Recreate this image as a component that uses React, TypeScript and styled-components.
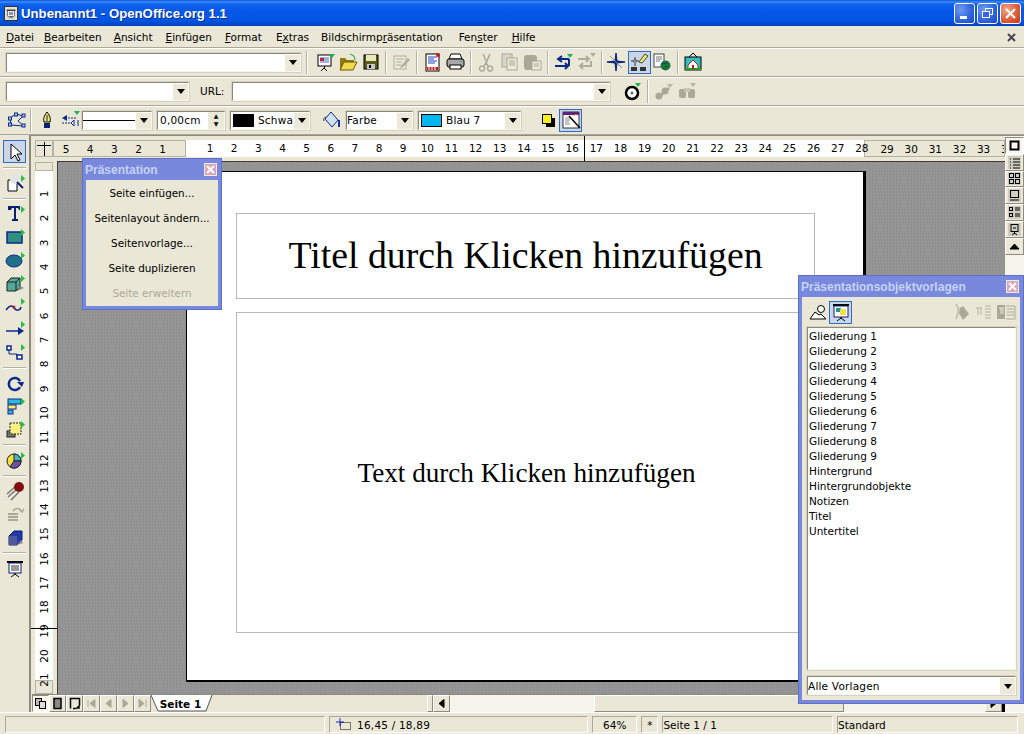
import React from 'react';
import styled, { createGlobalStyle, css } from 'styled-components';

const GlobalStyle = createGlobalStyle`
  html, body { margin: 0; padding: 0; background: #ece9d8; }
  body { font-family: "DejaVu Sans", "Liberation Sans", sans-serif; font-size: 11px; color: #000; }
  * { box-sizing: border-box; }
`;

const hatch = css`
  background-color: #ece9d8;
  background-image: conic-gradient(#e8e5d4 25%, transparent 0 50%, #e8e5d4 0 75%, transparent 0);
  background-size: 2px 2px;
`;

const sunken = css`
  border: 2px solid;
  border-color: #8b887a #f7f6ef #f7f6ef #8b887a;
  outline: 1px solid #d5d2c2;
  outline-offset: -1px;
`;

const Desktop = styled.div`
  position: relative;
  width: 1024px;
  height: 734px;
  overflow: hidden;
  display: flex;
  flex-direction: column;
  ${hatch}
`;

const TitleBar = styled.div`
  height: 26px;
  flex: none;
  display: flex;
  align-items: center;
  padding: 0 3px 0 4px;
  background: linear-gradient(180deg, #0a55d8 0, #3a8cf8 2px, #0f62ec 4px, #0558e6 12px, #0456e4 20px, #0348cf 24px, #0240b8 26px);
`;

const TitleLogo = styled.div`
  width: 14px;
  height: 15px;
  flex: none;
  display: flex;
  align-items: center;
  justify-content: center;
  background: #e4e1d0;
  border: 1px solid #333;
`;

const TitleText = styled.span`
  margin-left: 3px;
  flex: 1;
  color: #fff;
  font-family: "Liberation Sans", sans-serif;
  font-size: 13.2px;
  font-weight: bold;
  text-shadow: 1px 1px 0 #0a2f90;
`;

const WinButton = styled.div<{ $close?: boolean }>`
  width: 21px;
  height: 21px;
  margin-left: 2px;
  display: flex;
  align-items: center;
  justify-content: center;
  border: 1px solid #fff;
  border-radius: 3px;
  background: ${(p) =>
    p.$close
      ? 'radial-gradient(circle at 30% 30%, #f0a58c, #dc5a36 60%, #c03a18)'
      : 'radial-gradient(circle at 30% 30%, #6f9af0, #2f62dc 60%, #1c48c4)'};
`;

const MenuBar = styled.div`
  height: 22px;
  flex: none;
  display: flex;
  align-items: center;
  padding: 1px 8px 0 6px;
  border-bottom: 1px solid #aca899;
  box-shadow: 0 1px 0 #fff;
`;

const MenuItem = styled.span<{ $left: number }>`
  margin-left: ${(p) => p.$left}px;
  white-space: nowrap;
  font-size: 10.5px;
`;

const MenuClose = styled.span`
  margin-left: auto;
  color: #4a4458;
  display: flex;
`;

const Toolbar = styled.div`
  height: 29px;
  flex: none;
  display: flex;
  align-items: center;
  padding-left: 5px;
  border-bottom: 1px solid #aca899;
  box-shadow: inset 0 1px 0 #fff;
`;

const Separator = styled.div<{ $l?: number; $r?: number }>`
  width: 1px;
  height: 23px;
  flex: none;
  margin: 0 ${(p) => p.$r ?? 3.4}px 0 ${(p) => p.$l ?? 3.4}px;
  background: #b5b2a3;
  box-shadow: 1px 0 0 #fff;
`;

const ToolButton = styled.div<{ $active?: boolean; $left?: number }>`
  width: 23px;
  height: 23px;
  flex: none;
  margin-left: ${(p) => p.$left ?? 0}px;
  display: flex;
  align-items: center;
  justify-content: center;
  ${(p) => p.$active && 'background: #cbd5e8; outline: 1px solid #316ac5; outline-offset: -1px;'}
`;

const Combo = styled.div<{ $width: number; $left?: number }>`
  width: ${(p) => p.$width}px;
  height: 21px;
  flex: none;
  margin-left: ${(p) => p.$left ?? 0}px;
  display: flex;
  align-items: center;
  background: #fff;
  overflow: hidden;
  font-size: 10.5px;
  ${sunken}
`;

const ComboArrow = styled.div`
  width: 16px;
  height: 17px;
  margin-left: auto;
  flex: none;
  display: flex;
  align-items: center;
  justify-content: center;
  background: #ece9d8;
  border-left: 1px solid #fff;
  border-top: 1px solid #fff;
  &::after {
    content: '';
    border: 4px solid transparent;
    border-top: 5px solid #000;
    border-bottom: 0;
  }
`;

const ComboText = styled.span<{ $pad?: number }>`
  flex: 0 1 auto;
  min-width: 0;
  overflow: hidden;
  padding-left: ${(p) => p.$pad ?? 0}px;
  white-space: nowrap;
  letter-spacing: 0.2px;
`;

const UrlLabel = styled.span`
  margin: 0 7px 0 10px;
  font-size: 10.5px;
`;

const LineSample = styled.div`
  flex: 1;
  height: 1px;
  background: #000;
`;

const Spinner = styled.div`
  width: 16px;
  height: 17px;
  margin-left: auto;
  flex: none;
  display: flex;
  flex-direction: column;
  background: #ece9d8;
  font-size: 6px;
  line-height: 8px;
  text-align: center;
  color: #000;
`;

const ColorSwatch = styled.div<{ $color: string }>`
  width: 21px;
  height: 13px;
  flex: none;
  margin: 0 4px 0 2px;
  background: ${(p) => p.$color};
  border: 1px solid #000;
`;

const Main = styled.div`
  flex: 1;
  min-height: 0;
  display: flex;
`;

const LeftBar = styled.div`
  width: 31px;
  flex: none;
  display: flex;
  flex-direction: column;
  align-items: center;
  padding-top: 5px;
  border-right: 2px solid #8d8b7f;
`;

const LeftSep = styled.div`
  width: 23px;
  height: 1px;
  flex: none;
  margin: 4px 0 3px;
  background: #b5b2a3;
  box-shadow: 0 1px 0 #fff;
`;

const Center = styled.div`
  position: relative;
  flex: 1;
  min-width: 0;
  display: flex;
  flex-direction: column;
`;

const HRuler = styled.div`
  height: 26px;
  flex: none;
  display: flex;
  padding: 4px 0 4px 4px;
  border-top: 1px solid #8d8b7f;
`;

const RulerCorner = styled.div`
  width: 18px;
  flex: none;
  display: flex;
  align-items: center;
  justify-content: center;
  border: 1px solid #b5b2a3;
`;

const RulerGrey = styled.div<{ $width: number; $pad?: number }>`
  width: ${(p) => p.$width}px;
  flex: none;
  display: flex;
  padding-left: ${(p) => p.$pad ?? 0}px;
  border: 1px solid #b5b2a3;
  overflow: hidden;
`;

const RulerWhite = styled.div`
  position: relative;
  z-index: 1;
  width: 678px;
  flex: none;
  display: flex;
  padding-left: 12px;
  background: #fff;
`;

const RulerCell = styled.span`
  width: 24.15px;
  flex: none;
  text-align: center;
  line-height: 17px;
  font-size: 10.5px;
`;

const RulerMarkX = styled.div`
  position: absolute;
  left: 553px;
  top: 1px;
  width: 1px;
  height: 25px;
  background: #000;
  z-index: 2;
`;

const WorkRow = styled.div`
  flex: 1;
  min-height: 0;
  display: flex;
`;

const VRuler = styled.div`
  width: 26px;
  flex: none;
  position: relative;
  display: flex;
  flex-direction: column;
  padding: 1px 4px 0;
`;

const VGrey = styled.div<{ $height: number }>`
  height: ${(p) => p.$height}px;
  flex: none;
  border: 1px solid #b5b2a3;
`;

const VWhite = styled.div`
  height: 509px;
  flex: none;
  padding-top: 11px;
  background: #fff;
`;

const VCell = styled.span`
  height: 24.3px;
  display: flex;
  align-items: center;
  justify-content: center;
  font-size: 10.5px;
  span {
    transform: rotate(-90deg);
    white-space: nowrap;
  }
`;

const RulerMarkY = styled.div`
  position: absolute;
  left: 0;
  right: 0;
  top: 467px;
  height: 1px;
  background: #000;
`;

const Workspace = styled.div`
  flex: 1;
  min-width: 0;
  padding: 9px 0 0 128px;
  border-top: 1px solid #3c3c3c;
  border-left: 1px solid #3c3c3c;
  background-color: #989898;
  background-image: conic-gradient(#909090 25%, transparent 0 50%, #909090 0 75%, transparent 0);
  background-size: 3px 3px;
`;

const Slide = styled.div`
  width: 680px;
  height: 511px;
  display: flex;
  flex-direction: column;
  gap: 13px;
  padding: 41px 0 0 49px;
  background: #fff;
  border: solid #000;
  border-width: 1px 3px 2px 1px;
`;

const Placeholder = styled.div<{ $height: number; $size: number; $above?: number; $below?: number; $before?: number }>`
  width: 579px;
  height: ${(p) => p.$height}px;
  flex: none;
  display: flex;
  align-items: center;
  justify-content: center;
  padding: ${(p) => p.$above ?? 0}px 0 ${(p) => p.$below ?? 0}px ${(p) => p.$before ?? 0}px;
  border: 1px solid #b8b8b8;
  font-family: "Liberation Serif", serif;
  font-size: ${(p) => p.$size}px;
  white-space: nowrap;
`;

const TabBar = styled.div`
  height: 18px;
  flex: none;
  display: flex;
  align-items: stretch;
  margin-left: 1px;
  border-top: 1px solid #8d8b7f;
`;

const NavButton = styled.div<{ $pressed?: boolean }>`
  width: 17px;
  flex: none;
  display: flex;
  align-items: center;
  justify-content: center;
  border: 1px solid;
  border-color: #fff #8d8b7f #8d8b7f #fff;
  ${(p) => p.$pressed && 'background: #f7f6ef; border-color: #8d8b7f #fff #fff #8d8b7f;'}
`;

const SheetTab = styled.div`
  position: relative;
  width: 62px;
  flex: none;
  display: flex;
  align-items: center;
  justify-content: center;
  padding-right: 3px;
  font-size: 10.5px;
  font-weight: bold;
  span {
    position: relative;
  }
  svg {
    position: absolute;
    inset: 0;
  }
`;

const TabFill = styled.div`
  width: 214px;
  flex: none;
`;

const ScrollSplit = styled.div`
  width: 6px;
  flex: none;
  border: 1px solid;
  border-color: #fff #8d8b7f #8d8b7f #fff;
`;

const ScrollTrack = styled.div<{ $grow?: boolean }>`
  ${(p) => (p.$grow ? 'flex: 1;' : 'width: 144px; flex: none;')}
  background: #f5f3ea;
`;

const ScrollThumb = styled.div`
  width: 250px;
  flex: none;
  border: 1px solid;
  border-color: #fff #8d8b7f #8d8b7f #fff;
`;

const ScrollEnd = styled.div`
  width: 3px;
  flex: none;
  background: #000;
`;

const SideStrip = styled.div`
  width: 19px;
  flex: none;
  padding-top: 1px;
  display: flex;
  flex-direction: column;
  background: #f5f3ea;
  border-top: 1px solid #8d8b7f;
`;

const SideButton = styled.div<{ $pressed?: boolean }>`
  height: 16.8px;
  flex: none;
  display: flex;
  align-items: center;
  justify-content: center;
  background: #ece9d8;
  border: 1px solid;
  border-color: #fff #8d8b7f #8d8b7f #fff;
  ${(p) => p.$pressed && 'background: #f7f6ef; border-color: #8d8b7f #fff #fff #8d8b7f;'}
`;

const GlyphWell = styled.span`
  display: flex;
  background: #cfcdbf;
`;

const StatusBar = styled.div`
  height: 22px;
  flex: none;
  display: flex;
  padding: 3px 5px 1px;
  gap: 4.1px;
  border-top: 1px solid #fff;
`;

const StatusCell = styled.div<{ $width: number; $center?: boolean; $indent?: number }>`
  width: ${(p) => p.$width}px;
  flex: none;
  display: flex;
  align-items: center;
  justify-content: ${(p) => (p.$center ? 'center' : 'flex-start')};
  padding-left: ${(p) => p.$indent ?? 0}px;
  gap: 6px;
  font-size: 10.5px;
  white-space: nowrap;
  border: 1px solid;
  border-color: #aca899 #fff #fff #aca899;
`;

const PositionText = styled.span`
  letter-spacing: 0.2px;
`;

const FloatWindow = styled.div`
  position: absolute;
  z-index: 5;
  display: flex;
  flex-direction: column;
  background: #7888dc;
  border: 1px solid #5d6fc8;
  padding: 0 3px 3px;
`;

const WindowHead = styled.div`
  height: 21px;
  flex: none;
  display: flex;
  align-items: center;
  justify-content: space-between;
  color: #c5d2f5;
  font-family: "Liberation Sans", sans-serif;
  font-size: 12px;
  font-weight: bold;
  margin-left: -1px;
`;

const WindowClose = styled.div`
  width: 13px;
  height: 13px;
  display: flex;
  align-items: center;
  justify-content: center;
  margin-right: 1px;
  background: #d8a8b8;
  border: 1px solid #f0e8f0;
`;

const PresentationWindow = styled(FloatWindow)`
  left: 82px;
  top: 158px;
  width: 140px;
  height: 152px;
`;

const WindowBody = styled.div`
  flex: 1;
  display: flex;
  flex-direction: column;
  align-items: center;
  ${hatch}
`;

const WindowAction = styled.div<{ $disabled?: boolean }>`
  height: 25px;
  flex: none;
  display: flex;
  align-items: center;
  font-size: 10.4px;
  white-space: nowrap;
  color: ${(p) => (p.$disabled ? '#aca899' : '#000')};
`;

const StylesWindow = styled(FloatWindow)`
  left: 798px;
  top: 275px;
  width: 226px;
  height: 429px;
`;

const StylesBody = styled.div`
  flex: 1;
  min-height: 0;
  display: flex;
  flex-direction: column;
  padding: 1px 3px 4px 4px;
  ${hatch}
`;

const StylesTools = styled.div`
  height: 28px;
  flex: none;
  display: flex;
  align-items: center;
  justify-content: space-between;
`;

const ToolGroup = styled.div`
  display: flex;
  align-items: center;
`;

const StyleList = styled.div`
  flex: 1;
  min-height: 0;
  margin-bottom: 4px;
  padding: 1px 0 0 1px;
  background: #fff;
  ${sunken}
`;

const StyleRow = styled.div`
  height: 15px;
  line-height: 15px;
  font-size: 10.5px;
  white-space: nowrap;
`;

// small toolbar drawings, all on a 22 unit grid
const Flag = () => <polygon points="15,3 21,3 18,7" fill="#22b14c" />;
const FlagV = () => <polygon points="17,3 21,6.5 17,10" fill="#22c040" />;

const icons: Record<string, React.ReactNode> = {
  newdoc: (
    <>
      <rect x="4" y="4" width="13" height="11" fill="#fff" stroke="#000" />
      <rect x="6" y="6" width="9" height="6" fill="#9fb6e0" />
      <rect x="6" y="7" width="4" height="3" fill="#c02030" />
      <path d="M10.5 15v2M7 20l3-3 3 3" stroke="#000" fill="none" />
      <Flag />
    </>
  ),
  open: (
    <>
      <path d="M3 7h5l2 2h7v2H7l-3 8H3z" fill="#8a7a10" />
      <path d="M7 11h13l-4 8H3z" fill="#f0d850" stroke="#6a5a00" />
      <path d="M13 3l4 2 1 4" stroke="#20a040" fill="none" />
    </>
  ),
  save: (
    <>
      <rect x="4" y="4" width="14" height="14" fill="#5a5a1a" stroke="#000" />
      <rect x="6" y="4" width="10" height="6" fill="#e8e8b8" />
      <rect x="7" y="13" width="8" height="5" fill="#c8c8c8" />
      <rect x="9" y="14" width="2" height="3" fill="#000" />
    </>
  ),
  edit: (
    <>
      <rect x="4" y="5" width="12" height="13" fill="#ece9d8" stroke="#b0ad9e" />
      <path d="M6 8h8M6 11h6M6 14h5" stroke="#b0ad9e" />
      <path d="M11 15l7-8 2 2-7 7-3 1z" fill="#b0ad9e" />
    </>
  ),
  pdf: (
    <>
      <rect x="5" y="3" width="13" height="17" fill="#fff" stroke="#000" />
      <path d="M7 6h9M7 8h6M7 10h9M7 12h7" stroke="#1a40c0" />
      <rect x="6" y="16" width="11" height="3" fill="#d01818" />
      <path d="M8 16v3M11 16v3M14 16v3" stroke="#fff" />
      <circle cx="17" cy="4" r="2" fill="#d01818" />
    </>
  ),
  print: (
    <>
      <path d="M7 3h9l2 5H5z" fill="#fff" stroke="#000" />
      <rect x="3" y="8" width="17" height="8" rx="2" fill="#a8a8a8" stroke="#000" />
      <rect x="6" y="14" width="11" height="4" fill="#fff" stroke="#000" />
      <rect x="16" y="10" width="2" height="1" fill="#20c040" />
    </>
  ),
  cut: (
    <path
      d="M8 3l4 9M15 3l-4 9M7 15a2.5 2.5 0 1 0 .1 0M15 15a2.5 2.5 0 1 0 .1 0M9 15l2-3M13 15l-2-3"
      stroke="#aca899"
      strokeWidth="1.5"
      fill="none"
    />
  ),
  copy: (
    <>
      <rect x="4" y="3" width="10" height="13" fill="#d8d6c8" stroke="#aca899" />
      <rect x="9" y="7" width="10" height="12" fill="#ece9d8" stroke="#aca899" />
      <path d="M11 10h6M11 12h6M11 14h6" stroke="#aca899" />
    </>
  ),
  paste: (
    <>
      <rect x="3" y="4" width="13" height="15" rx="3" fill="#aca899" />
      <rect x="11" y="10" width="9" height="9" fill="#ece9d8" stroke="#aca899" />
      <path d="M13 13h5M13 15h5" stroke="#aca899" />
    </>
  ),
  undo: (
    <>
      <path d="M17 8H7M10 5L6 8l4 3" stroke="#0a2a8a" strokeWidth="2" fill="none" />
      <path d="M3 15h13M13 12l3 3-3 3M17 8v7" stroke="#0a2a8a" strokeWidth="2" fill="none" />
      <Flag />
    </>
  ),
  redo: (
    <>
      <path d="M3 8h11M11 5l3 3-3 3M16 10v5H5M8 12l-3 3 3 3" stroke="#b0ad9e" strokeWidth="2" fill="none" />
      <polygon points="15,2 21,2 18,6" fill="#b0ad9e" />
    </>
  ),
  nav: (
    <>
      <path d="M11 2l1 8 8 1-8 1-1 8-1-8-8-1 8-1z" fill="#0a1f70" stroke="#0a1f70" />
      <path d="M5 5l6 6 6 6" stroke="#8090c0" />
    </>
  ),
  gallery: (
    <>
      <circle cx="7" cy="10" r="2" fill="#888" />
      <path d="M3 10h3M8 10h3M7 6v3M7 12v3" stroke="#333" />
      <path d="M11 11l6-8 3 2-6 7z" fill="#f0f060" stroke="#444" />
      <rect x="3" y="16" width="6" height="4" fill="#333" />
      <rect x="12" y="16" width="6" height="4" fill="#333" />
    </>
  ),
  web: (
    <>
      <rect x="3" y="3" width="10" height="13" fill="#fff" stroke="#444" />
      <path d="M5 6h6M5 8h6M5 10h4" stroke="#777" />
      <circle cx="14.5" cy="14.5" r="5" fill="#1a7a30" />
      <path d="M11 13c2-2 3 1 5-1M13 18c0-2 3-2 4-3" stroke="#1030b0" fill="none" />
    </>
  ),
  home: (
    <>
      <path d="M7 6l4-4 4 4" stroke="#000" fill="none" />
      <rect x="3" y="6" width="16" height="13" fill="#30c0c0" stroke="#000" />
      <path d="M6 14l5-5 5 5v4H6z" fill="#fff" stroke="#c01818" />
      <rect x="3" y="17" width="16" height="2" fill="#20a020" />
      <rect x="10" y="14" width="2" height="4" fill="#c01818" />
    </>
  ),
  target: (
    <>
      <circle cx="10" cy="13" r="6" fill="#fff" stroke="#000" strokeWidth="2.5" />
      <circle cx="10" cy="13" r="1.5" fill="#666" />
      <polygon points="13,3 19,3 16,7" fill="#22b14c" />
    </>
  ),
  link: (
    <>
      <path d="M6 17L16 8" stroke="#aca899" strokeWidth="3" />
      <circle cx="6" cy="16" r="3.5" fill="#aca899" />
      <circle cx="12" cy="11" r="3.5" fill="#aca899" />
      <polygon points="14,4 20,4 17,8" fill="#b8b5a6" />
    </>
  ),
  binoc: (
    <>
      <rect x="3" y="9" width="7" height="9" rx="2" fill="#aca899" />
      <rect x="12" y="9" width="7" height="9" rx="2" fill="#aca899" />
      <rect x="8" y="8" width="6" height="4" fill="#c8c5b6" />
      <polygon points="14,3 20,3 17,7" fill="#b8b5a6" />
    </>
  ),
  points: (
    <>
      <path d="M5 9l6-4 7 2-5 5 6 5-13-1z" fill="none" stroke="#0a2a8a" />
      <g fill="#b8c8f0" stroke="#0a2a8a">
        <rect x="3.5" y="8" width="3" height="3" />
        <rect x="9.5" y="4" width="3" height="3" />
        <rect x="17" y="5" width="3" height="3" />
        <rect x="3.5" y="14" width="3" height="3" />
        <rect x="17" y="15" width="3" height="3" />
      </g>
    </>
  ),
  pen: (
    <>
      <path d="M11 3c3 4 4 7 3 10H8c-1-3 0-6 3-10z" fill="#f8e860" stroke="#000" />
      <path d="M11 6v6" stroke="#0a1f70" />
      <rect x="8" y="14" width="6" height="5" fill="#0a1f70" />
    </>
  ),
  arrows: (
    <>
      <path d="M9 9h8M3 14h9" stroke="#0a2a8a" strokeDasharray="2 1" />
      <polygon points="3,9 8,6 8,12" fill="#0a2a8a" />
      <path d="M12 14l3-3v6zM19 11v6" fill="#fff" stroke="#0a2a8a" />
      <polygon points="15,2 21,2 18,6" fill="#22b14c" />
    </>
  ),
  bucket: (
    <>
      <path d="M10 3l7 8-6 7-7-8z" fill="#cfe4f0" stroke="#0a2a8a" />
      <path d="M5 8c-2 0-3 3-2 4" stroke="#444" fill="none" />
      <path d="M18 11v7" stroke="#1030b0" strokeWidth="2" />
    </>
  ),
  shadow: (
    <>
      <rect x="9" y="9" width="9" height="9" fill="#000" />
      <rect x="5.5" y="5.5" width="9" height="9" fill="#f8f020" stroke="#000" />
    </>
  ),
  wizard: (
    <>
      <rect x="3" y="3" width="16" height="16" fill="#fff" stroke="#333" />
      <rect x="3" y="3" width="16" height="3" fill="#602080" />
      <path d="M5 9h6M5 11h5M5 13h4M5 15h5" stroke="#888" />
      <path d="M9 7l11 12" stroke="#000" strokeWidth="1.5" />
      <path d="M12 6l2 1M15 6h2" stroke="#f0d020" />
    </>
  ),
  cursor: <path d="M7 3v15l4-4 3 6 2-1-3-6h5z" fill="#fff" stroke="#000" />,
  zoom: (
    <>
      <path d="M4 8h9v11H4z" fill="#fff" stroke="#000" />
      <circle cx="11" cy="7" r="5" fill="#e4e4e4" />
      <path d="M13 10l6 6" stroke="#0a1f70" strokeWidth="2" />
      <FlagV />
    </>
  ),
  text: (
    <>
      <path d="M4 3h12v4h-1l-1-2h-2v11h2v2H8v-2h2V5H8L7 7H6H4z" fill="#0a1f70" />
      <FlagV />
    </>
  ),
  rect: (
    <>
      <rect x="3" y="6" width="15" height="11" fill="#2f8f80" stroke="#0a2a8a" strokeWidth="1.5" />
      <FlagV />
    </>
  ),
  ellipse: (
    <>
      <ellipse cx="10" cy="12" rx="8" ry="6" fill="#1f6f88" stroke="#0a2a8a" />
      <FlagV />
    </>
  ),
  cube: (
    <>
      <path d="M3 10l4-4h9v9l-4 4H3z" fill="#50a898" stroke="#222" />
      <path d="M3 10h9v9M12 10l4-4" stroke="#222" fill="none" />
      <path d="M13 19l7-3-4-2z" fill="#888" />
      <FlagV />
    </>
  ),
  curve: (
    <>
      <path d="M2 15c4-5 6-5 8-2s6 3 7-1" stroke="#0a2a8a" strokeWidth="1.5" fill="none" />
      <circle cx="10" cy="12" r="1.5" fill="#c02020" />
      <FlagV />
    </>
  ),
  arrow: (
    <>
      <path d="M2 13h14" stroke="#0a2a8a" strokeWidth="1.5" />
      <polygon points="14,9 20,13 14,17" fill="#0a2a8a" />
      <FlagV />
    </>
  ),
  connector: (
    <>
      <path d="M5 8v5h8v3" stroke="#0a2a8a" fill="none" />
      <rect x="3" y="5" width="4" height="4" fill="#fff" stroke="#0a2a8a" strokeWidth="1.5" />
      <rect x="13" y="14" width="5" height="4" fill="#fff" stroke="#0a2a8a" strokeWidth="1.5" />
      <FlagV />
    </>
  ),
  rotate: (
    <>
      <path d="M16 9a6 6 0 1 0 0 6" stroke="#0a2a8a" strokeWidth="2.5" fill="none" />
      <polygon points="13,10 20,10 18,15" fill="#0a2a8a" />
    </>
  ),
  align: (
    <>
      <rect x="4" y="4" width="13" height="5" fill="#30b8d8" stroke="#0a2a8a" />
      <rect x="4" y="10" width="8" height="4" fill="#f8f060" stroke="#0a2a8a" />
      <rect x="4" y="15" width="5" height="4" fill="#30b8d8" stroke="#0a2a8a" />
      <FlagV />
    </>
  ),
  arrange: (
    <>
      <rect x="3" y="13" width="8" height="6" fill="#777" stroke="#222" />
      <rect x="6" y="5" width="11" height="11" fill="#f8f080" stroke="#222" strokeDasharray="2 1" />
      <FlagV />
    </>
  ),
  chart: (
    <>
      <circle cx="10" cy="12" r="7" fill="#f0e040" stroke="#222" />
      <path d="M10 12V5a7 7 0 0 1 7 7z" fill="#40b8c8" stroke="#222" />
      <path d="M10 12h7a7 7 0 0 1-11 6z" fill="#7050a0" stroke="#222" />
      <FlagV />
    </>
  ),
  comet: (
    <>
      <path d="M3 14l9-8M4 17l9-8M7 20l8-8" stroke="#777" strokeWidth="1.5" />
      <circle cx="15" cy="7" r="5" fill="#801010" />
    </>
  ),
  stack: (
    <>
      <path d="M4 11h10M4 14h10M4 17h10" stroke="#aca899" strokeWidth="2" />
      <path d="M9 8c3-4 8-3 8 1M15 6l3 3 2-3" stroke="#aca899" strokeWidth="1.5" fill="none" />
    </>
  ),
  box3d: (
    <>
      <path d="M5 10l5-5h8v9l-5 5H5z" fill="#2438a8" stroke="#0a1f70" />
      <rect x="5" y="10" width="8" height="9" fill="#50589a" />
      <path d="M13 19l6-2-2-3z" fill="#888" />
    </>
  ),
  show: (
    <>
      <rect x="3" y="4" width="16" height="2" fill="#000" />
      <rect x="5" y="6" width="12" height="10" fill="#fff" stroke="#0a1f70" />
      <path d="M7 9h8M7 11h8M7 13h8" stroke="#333" />
      <path d="M11 16v2M7 20l4-3 4 3" stroke="#000" fill="none" />
    </>
  ),
  stylesPara: (
    <>
      <circle cx="14" cy="8" r="3.5" fill="#fff" stroke="#000" />
      <path d="M3 18l5-7 4 3 2-1 5 5z" fill="#fff" stroke="#000" />
    </>
  ),
  stylesShow: (
    <>
      <rect x="3" y="3" width="16" height="2" fill="#000" />
      <rect x="4" y="5" width="14" height="11" fill="#fff" stroke="#0a1f70" />
      <rect x="6" y="7" width="5" height="4" fill="#2090a0" />
      <rect x="10" y="8" width="6" height="6" fill="#f0e040" />
      <path d="M11 16v2M7 20l4-3 4 3" stroke="#000" fill="none" />
    </>
  ),
  fillFormat: (
    <>
      <path d="M8 9l6-4 6 8-6 6z" fill="#aca899" />
      <path d="M7 3l3 6-3 9" stroke="#c8c5b6" strokeWidth="2" fill="none" />
    </>
  ),
  newStyle: <path d="M4 7h6M6 7v7M9 7v7M13 5h6M13 8h6M13 11h6M13 14h6M13 17h6" stroke="#b8b5a6" fill="none" />,
  updateStyle: (
    <>
      <rect x="2" y="4" width="8" height="14" fill="#aca899" />
      <path d="M4 7h5M6 7v6M8 7v6" stroke="#ece9d8" />
      <path d="M11 5h9v13h-9M12 8h7M12 11h7M12 14h7" stroke="#aca899" fill="none" />
    </>
  ),
};

const Icon = ({ name, size = 22 }: { name: string; size?: number }) => (
  <svg width={size} height={size} viewBox="0 0 22 22">
    {icons[name]}
  </svg>
);

const SideGlyph = ({ kind }: { kind: string }) => (
  <svg width="13" height="13" viewBox="0 0 13 13" fill="none" stroke="#000">
    {kind === 'frame' && <rect x="2.5" y="2.5" width="8" height="8" strokeWidth="2" />}
    {kind === 'list' && <path d="M2 3h1M5 3h7M2 6h1M5 6h7M2 9h1M5 9h7M2 12h1M5 12h7" />}
    {kind === 'grid' && (
      <>
        <rect x="1.5" y="1.5" width="4" height="4" />
        <rect x="7.5" y="1.5" width="4" height="4" />
        <rect x="1.5" y="7.5" width="4" height="4" />
        <rect x="7.5" y="7.5" width="4" height="4" />
      </>
    )}
    {kind === 'slide' && (
      <>
        <rect x="2.5" y="1.5" width="8" height="7" />
        <path d="M2 11h9" />
      </>
    )}
    {kind === 'rows' && (
      <>
        <rect x="1.5" y="1.5" width="3" height="3" />
        <rect x="1.5" y="7.5" width="3" height="3" />
        <path d="M7 2h5M7 4h5M7 8h5M7 10h5" />
      </>
    )}
    {kind === 'show' && (
      <>
        <rect x="3" y="1.5" width="7" height="7" />
        <path d="M5 5h3M6.5 9v2M4 12l2.5-2 2.5 2" />
      </>
    )}
    {kind === 'up' && <path d="M2 9h9L6.5 4z" fill="#000" />}
    {kind === 'pages' && (
      <>
        <rect x="1.5" y="1.5" width="6" height="7" fill="#bbb" />
        <rect x="5.5" y="4.5" width="6" height="7" fill="#ddd" />
      </>
    )}
    {kind === 'page' && <rect x="3" y="1.5" width="7" height="10" fill="#888" strokeWidth="1.5" />}
    {kind === 'notes' && <path d="M2.5 11.5v-10h9v7M5 11.5h3M9 11l2-2v2z" strokeWidth="1.5" />}
    {kind === 'first' && <path d="M3 3v7M10 2.5v8L5 6.5z" stroke="#aca899" fill="#aca899" />}
    {kind === 'prev' && <path d="M9 2.5v8L4 6.5z" stroke="#aca899" fill="#aca899" />}
    {kind === 'next' && <path d="M4 2.5v8L9 6.5z" stroke="#aca899" fill="#aca899" />}
    {kind === 'last' && <path d="M10 3v7M3 2.5v8L8 6.5z" stroke="#aca899" fill="#aca899" />}
    {kind === 'left' && <path d="M9 2.5v8L4 6.5z" fill="#000" />}
    {kind === 'right' && <path d="M4 2.5v8L9 6.5z" fill="#000" />}
  </svg>
);

const CloseCross = () => (
  <svg width="9" height="9" viewBox="0 0 9 9" stroke="#fff" strokeWidth="2">
    <path d="M1 1l7 7M8 1L1 8" />
  </svg>
);

const menus: [string, string, string, number][] = [
  ['', 'D', 'atei', 0],
  ['', 'B', 'earbeiten', 10],
  ['', 'A', 'nsicht', 12],
  ['', 'E', 'infügen', 13],
  ['', 'F', 'ormat', 13],
  ['E', 'x', 'tras', 14],
  ['Bildschirmp', 'r', 'äsentation', 12],
  ['Fen', 's', 'ter', 16],
  ['', 'H', 'ilfe', 14],
];

const mainTools: (string | null)[] = [
  'newdoc', 'open', 'save', null, 'edit', null, 'pdf', 'print', null, 'cut', 'copy', 'paste', null, 'undo', 'redo', null, 'nav', 'gallery', 'web', null, 'home',
];

const leftTools: (string | null)[] = [
  'zoom', null, 'text', 'rect', 'ellipse', 'cube', 'curve', 'arrow', 'connector', null, 'rotate', 'align', 'arrange', null, 'chart', null, 'comet', 'stack', 'box3d', null, 'show',
];

const sideKinds = ['list', 'grid', 'slide', 'rows', 'show'];

const styleNames = [
  'Gliederung 1', 'Gliederung 2', 'Gliederung 3', 'Gliederung 4', 'Gliederung 5', 'Gliederung 6', 'Gliederung 7', 'Gliederung 8', 'Gliederung 9',
  'Hintergrund', 'Hintergrundobjekte', 'Notizen', 'Titel', 'Untertitel',
];

const range = (from: number, to: number) => Array.from({ length: to - from + 1 }, (_, i) => from + i);

const App = () => (
  <Desktop>
    <GlobalStyle />

    <TitleBar>
      <TitleLogo>
        <Icon name="show" size={13} />
      </TitleLogo>
      <TitleText>Unbenannt1 - OpenOffice.org 1.1</TitleText>
      <WinButton>
        <svg width="13" height="13" viewBox="0 0 13 13">
          <rect x="2" y="9" width="7" height="3" fill="#fff" />
        </svg>
      </WinButton>
      <WinButton>
        <svg width="13" height="13" viewBox="0 0 13 13" fill="none" stroke="#fff">
          <rect x="4.5" y="1.5" width="7" height="6" />
          <rect x="1.5" y="4.5" width="7" height="6" fill="#3a68dc" />
        </svg>
      </WinButton>
      <WinButton $close>
        <svg width="13" height="13" viewBox="0 0 13 13" stroke="#fff" strokeWidth="2">
          <path d="M2 2l9 9M11 2l-9 9" />
        </svg>
      </WinButton>
    </TitleBar>

    <MenuBar>
      {menus.map(([before, key, after, left]) => (
        <MenuItem key={before + key + after} $left={left}>
          {before}
          <u>{key}</u>
          {after}
        </MenuItem>
      ))}
      <MenuClose>
        <svg width="9" height="9" viewBox="0 0 9 9" stroke="currentColor" strokeWidth="2">
          <path d="M1 1l7 7M8 1L1 8" />
        </svg>
      </MenuClose>
    </MenuBar>

    <Toolbar>
      <Combo $width={297}>
        <ComboArrow />
      </Combo>
      <Separator $l={4} $r={6} />
      {mainTools.map((tool, i) =>
        tool ? (
          <ToolButton key={i} $active={tool === 'gallery'}>
            <Icon name={tool} />
          </ToolButton>
        ) : (
          <Separator key={i} />
        ),
      )}
    </Toolbar>

    <Toolbar>
      <Combo $width={185}>
        <ComboArrow />
      </Combo>
      <UrlLabel>URL:</UrlLabel>
      <Combo $width={380}>
        <ComboArrow />
      </Combo>
      <ToolButton $left={10}>
        <Icon name="target" />
      </ToolButton>
      <Separator $l={3} $r={4} />
      <ToolButton>
        <Icon name="link" />
      </ToolButton>
      <ToolButton>
        <Icon name="binoc" />
      </ToolButton>
    </Toolbar>

    <Toolbar>
      <ToolButton $left={-1}>
        <Icon name="points" />
      </ToolButton>
      <Separator $l={3} $r={4} />
      <ToolButton>
        <Icon name="pen" />
      </ToolButton>
      <ToolButton>
        <Icon name="arrows" />
      </ToolButton>
      <Combo $width={72}>
        <LineSample />
        <ComboArrow />
      </Combo>
      <Combo $width={70} $left={3}>
        <ComboText $pad={2}>0,00cm</ComboText>
        <Spinner>
          <span>▲</span>
          <span>▼</span>
        </Spinner>
      </Combo>
      <Combo $width={82} $left={3}>
        <ColorSwatch $color="#000" />
        <ComboText>Schwar</ComboText>
        <ComboArrow />
      </Combo>
      <ToolButton $left={9}>
        <Icon name="bucket" />
      </ToolButton>
      <Combo $width={69} $left={2}>
        <ComboText>Farbe</ComboText>
        <ComboArrow />
      </Combo>
      <Combo $width={105} $left={3}>
        <ColorSwatch $color="#00b8f0" />
        <ComboText>Blau 7</ComboText>
        <ComboArrow />
      </Combo>
      <ToolButton $left={14}>
        <Icon name="shadow" />
      </ToolButton>
      <ToolButton $active>
        <Icon name="wizard" />
      </ToolButton>
    </Toolbar>

    <Main>
      <LeftBar>
        <ToolButton $active>
          <Icon name="cursor" />
        </ToolButton>
        <LeftSep />
        {leftTools.map((tool, i) =>
          tool ? (
            <ToolButton key={i}>
              <Icon name={tool} />
            </ToolButton>
          ) : (
            <LeftSep key={i} />
          ),
        )}
      </LeftBar>

      <Center>
        <HRuler>
          <RulerCorner>
            <svg width="14" height="14" viewBox="0 0 14 14" stroke="#000">
              <path d="M0 3.5h14M7.5 0v14" />
            </svg>
          </RulerCorner>
          <RulerGrey $width={133}>
            {[5, 4, 3, 2, 1].map((n) => (
              <RulerCell key={n}>{n}</RulerCell>
            ))}
          </RulerGrey>
          <RulerWhite>
            {range(1, 28).map((n) => (
              <RulerCell key={n}>{n}</RulerCell>
            ))}
          </RulerWhite>
          <RulerGrey $width={141} $pad={10}>
            {range(29, 34).map((n) => (
              <RulerCell key={n}>{n}</RulerCell>
            ))}
          </RulerGrey>
        </HRuler>
        <RulerMarkX />

        <WorkRow>
          <VRuler>
            <VGrey $height={9} />
            <VWhite>
              {range(1, 21).map((n) => (
                <VCell key={n}>
                  <span>{n}</span>
                </VCell>
              ))}
            </VWhite>
            <VGrey $height={14} />
            <RulerMarkY />
          </VRuler>
          <Workspace>
            <Slide>
              <Placeholder $height={86} $size={37.8} $below={3}>
                Titel durch Klicken hinzufügen
              </Placeholder>
              <Placeholder $height={321} $size={27.15} $above={2} $before={2}>
                Text durch Klicken hinzufügen
              </Placeholder>
            </Slide>
          </Workspace>
        </WorkRow>

        <TabBar>
          <NavButton $pressed>
            <SideGlyph kind="pages" />
          </NavButton>
          <NavButton>
            <SideGlyph kind="page" />
          </NavButton>
          <NavButton>
            <SideGlyph kind="notes" />
          </NavButton>
          {['first', 'prev', 'next', 'last'].map((kind) => (
            <NavButton key={kind}>
              <SideGlyph kind={kind} />
            </NavButton>
          ))}
          <SheetTab>
            <svg width="62" height="17" viewBox="0 0 62 17">
              <path d="M0 0l7 16h48l6-16" fill="#fff" stroke="#555" />
            </svg>
            <span>Seite 1</span>
          </SheetTab>
          <TabFill />
          <ScrollSplit />
          <NavButton>
            <SideGlyph kind="left" />
          </NavButton>
          <ScrollTrack />
          <ScrollThumb />
          <ScrollTrack $grow />
          <NavButton>
            <SideGlyph kind="right" />
          </NavButton>
          <ScrollEnd />
        </TabBar>
      </Center>

      <SideStrip>
        <SideButton $pressed>
          <SideGlyph kind="frame" />
        </SideButton>
        {sideKinds.map((kind) => (
          <SideButton key={kind}>
            <GlyphWell>
              <SideGlyph kind={kind} />
            </GlyphWell>
          </SideButton>
        ))}
        <SideButton>
          <SideGlyph kind="up" />
        </SideButton>
      </SideStrip>
    </Main>

    <StatusBar>
      <StatusCell $width={320} />
      <StatusCell $width={259} $indent={6}>
        <svg width="15" height="13" viewBox="0 0 15 13" fill="none">
          <path d="M0 4h8M4 0v8" stroke="#1030d0" />
          <rect x="4.5" y="4.5" width="10" height="7" stroke="#000" strokeDasharray="1 1" />
        </svg>
        <PositionText>16,45 / 18,89</PositionText>
      </StatusCell>
      <StatusCell $width={45} $center>
        64%
      </StatusCell>
      <StatusCell $width={17} $center>
        *
      </StatusCell>
      <StatusCell $width={170.5}>Seite 1 / 1</StatusCell>
      <StatusCell $width={181}>Standard</StatusCell>
    </StatusBar>

    <PresentationWindow>
      <WindowHead>
        <span>Präsentation</span>
        <WindowClose>
          <CloseCross />
        </WindowClose>
      </WindowHead>
      <WindowBody>
        <WindowAction>Seite einfügen...</WindowAction>
        <WindowAction>Seitenlayout ändern...</WindowAction>
        <WindowAction>Seitenvorlage...</WindowAction>
        <WindowAction>Seite duplizieren</WindowAction>
        <WindowAction $disabled>Seite erweitern</WindowAction>
      </WindowBody>
    </PresentationWindow>

    <StylesWindow>
      <WindowHead>
        <span>Präsentationsobjektvorlagen</span>
        <WindowClose>
          <CloseCross />
        </WindowClose>
      </WindowHead>
      <StylesBody>
        <StylesTools>
          <ToolGroup>
            <ToolButton>
              <Icon name="stylesPara" />
            </ToolButton>
            <ToolButton $active>
              <Icon name="stylesShow" />
            </ToolButton>
          </ToolGroup>
          <ToolGroup>
            <ToolButton>
              <Icon name="fillFormat" />
            </ToolButton>
            <ToolButton>
              <Icon name="newStyle" />
            </ToolButton>
            <ToolButton>
              <Icon name="updateStyle" />
            </ToolButton>
          </ToolGroup>
        </StylesTools>
        <StyleList>
          {styleNames.map((name) => (
            <StyleRow key={name}>{name}</StyleRow>
          ))}
        </StyleList>
        <Combo $width={211}>
          <ComboText>Alle Vorlagen</ComboText>
          <ComboArrow />
        </Combo>
      </StylesBody>
    </StylesWindow>
  </Desktop>
);

export default App;
